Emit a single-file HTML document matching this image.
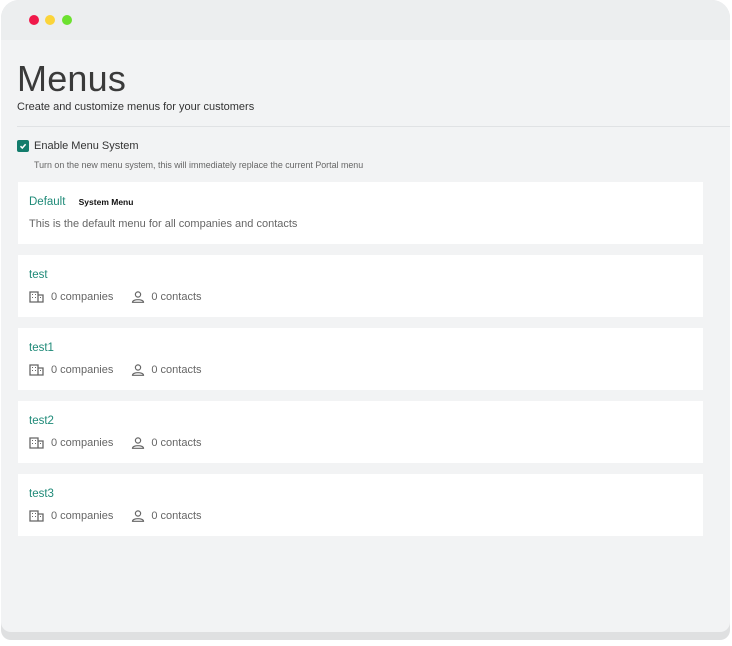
<!DOCTYPE html>
<html><head><style>
body{margin:0;width:732px;height:646px;background:#fff;font-family:"Liberation Sans",sans-serif;overflow:hidden;position:relative}
.win{position:absolute;left:1px;top:0;width:729px;height:640px;border-radius:18px 18px 10px 10px;background:#dfe0e1;overflow:hidden}
.bar{position:absolute;left:0;top:0;right:0;height:40px;background:#eceeef}
.dot{position:absolute;top:15px;width:10px;height:10px;border-radius:50%}
.body{position:absolute;left:0;top:40px;right:0;height:592px;background:#f2f3f4;border-radius:0 0 10px 10px}
h1{position:absolute;left:17px;top:58px;margin:0;font-weight:300;font-size:36px;color:#3a3a3a;letter-spacing:0.2px}
.sub{position:absolute;left:17px;top:101px;font-size:11px;color:#333}
.hr{position:absolute;left:17px;right:2px;top:126px;height:1px;background:#e0e2e4}
.cb{position:absolute;left:17px;top:140px;width:12px;height:12px;background:#137c6c;border-radius:2px}
.en{position:absolute;left:34px;top:140px;font-size:11px;color:#333}
.tn{position:absolute;left:34px;top:160px;font-size:8.9px;color:#666}
.card{position:absolute;left:18px;width:685px;height:62px;background:#fff}
.t{position:absolute;left:11px;top:14px;font-size:11.5px;color:#1f8a78}
.m{position:absolute;left:11px;top:36px;font-size:11px;color:#666;display:flex;align-items:center}
svg{display:block}
</style></head><body>
<div class="win">
<div class="bar"></div>
<div class="dot" style="left:28px;background:#f0194a"></div>
<div class="dot" style="left:44px;background:#fbd43a"></div>
<div class="dot" style="left:61px;background:#6ce12f"></div>
<div class="body"></div>
</div>
<h1>Menus</h1>
<div class="sub">Create and customize menus for your customers</div>
<div class="hr"></div>
<div class="cb"><svg width="12" height="12"><path d="M3.5 6.2 5.3 8 8.6 4.3" stroke="#fff" stroke-width="1.5" fill="none"/></svg></div>
<div class="en">Enable Menu System</div>
<div class="tn">Turn on the new menu system, this will immediately replace the current Portal menu</div>
<div class="card" style="top:182px"><div class="t">Default <b style="color:#111;font-size:8.5px;margin-left:10px">System Menu</b></div><div class="m" style="top:36px;font-size:11px">This is the default menu for all companies and contacts</div></div>
<div class="card" style="top:255px"><div class="t">test</div><div class="m"><svg width="16" height="12"><path d="M1 1h8v10H1zM9 4h5v7H9" fill="none" stroke="#666" stroke-width="1.3"/><path d="M3 3h1v1H3zM6 3h1v1H6zM3 6h1v1H3zM6 6h1v1H6zM11 6h1v1h-1z" fill="#666"/></svg><span style="margin-left:6px">0 companies</span><svg style="margin-left:18px" width="14" height="12"><circle cx="7" cy="3.5" r="2.6" fill="none" stroke="#666" stroke-width="1.2"/><path d="M1.5 11.3c0-3.5 11-3.5 11 0z" fill="none" stroke="#666" stroke-width="1.2"/></svg><span style="margin-left:6px">0 contacts</span></div></div>
<div class="card" style="top:328px"><div class="t">test1</div><div class="m"><svg width="16" height="12"><path d="M1 1h8v10H1zM9 4h5v7H9" fill="none" stroke="#666" stroke-width="1.3"/><path d="M3 3h1v1H3zM6 3h1v1H6zM3 6h1v1H3zM6 6h1v1H6zM11 6h1v1h-1z" fill="#666"/></svg><span style="margin-left:6px">0 companies</span><svg style="margin-left:18px" width="14" height="12"><circle cx="7" cy="3.5" r="2.6" fill="none" stroke="#666" stroke-width="1.2"/><path d="M1.5 11.3c0-3.5 11-3.5 11 0z" fill="none" stroke="#666" stroke-width="1.2"/></svg><span style="margin-left:6px">0 contacts</span></div></div>
<div class="card" style="top:401px"><div class="t">test2</div><div class="m"><svg width="16" height="12"><path d="M1 1h8v10H1zM9 4h5v7H9" fill="none" stroke="#666" stroke-width="1.3"/><path d="M3 3h1v1H3zM6 3h1v1H6zM3 6h1v1H3zM6 6h1v1H6zM11 6h1v1h-1z" fill="#666"/></svg><span style="margin-left:6px">0 companies</span><svg style="margin-left:18px" width="14" height="12"><circle cx="7" cy="3.5" r="2.6" fill="none" stroke="#666" stroke-width="1.2"/><path d="M1.5 11.3c0-3.5 11-3.5 11 0z" fill="none" stroke="#666" stroke-width="1.2"/></svg><span style="margin-left:6px">0 contacts</span></div></div>
<div class="card" style="top:474px"><div class="t">test3</div><div class="m"><svg width="16" height="12"><path d="M1 1h8v10H1zM9 4h5v7H9" fill="none" stroke="#666" stroke-width="1.3"/><path d="M3 3h1v1H3zM6 3h1v1H6zM3 6h1v1H3zM6 6h1v1H6zM11 6h1v1h-1z" fill="#666"/></svg><span style="margin-left:6px">0 companies</span><svg style="margin-left:18px" width="14" height="12"><circle cx="7" cy="3.5" r="2.6" fill="none" stroke="#666" stroke-width="1.2"/><path d="M1.5 11.3c0-3.5 11-3.5 11 0z" fill="none" stroke="#666" stroke-width="1.2"/></svg><span style="margin-left:6px">0 contacts</span></div></div>
</body></html>
